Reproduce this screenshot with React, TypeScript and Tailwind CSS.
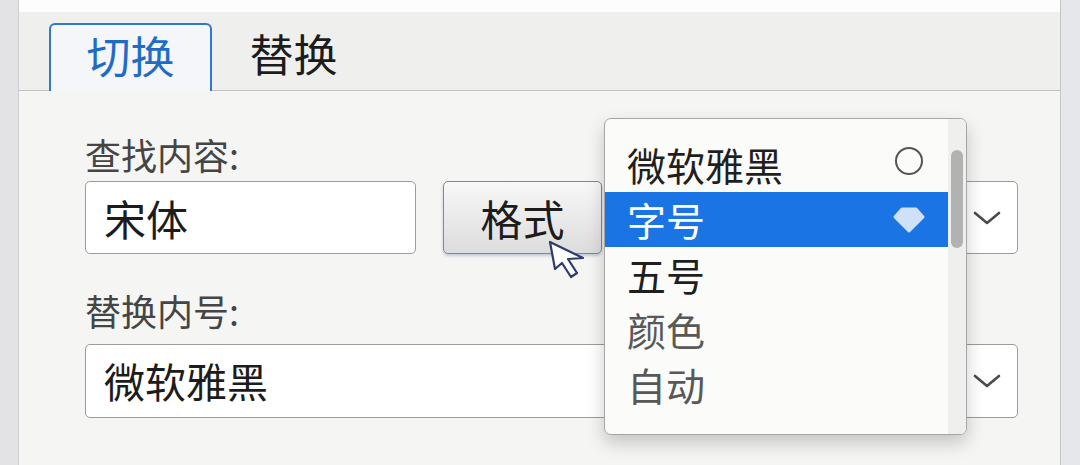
const font = "font-['Noto_Sans_CJK_SC','Noto_Sans',sans-serif]";

const menuItems = [
  { label: '微软雅黑', text: 'text-[#1f1f1f]', mark: 'circle' },
  { label: '字号', text: 'text-white', mark: 'diamond', active: true },
  { label: '五号', text: 'text-[#1f1f1f]' },
  { label: '颜色', text: 'text-[#585858]' },
  { label: '自动', text: 'text-[#585858]' }
];

const Chevron = () => (
  <svg width="28" height="16" viewBox="0 0 28 16">
    <path
      d="M2 3 L14 13 L26 3"
      fill="none"
      stroke="#4a4a4a"
      strokeWidth="2.6"
      strokeLinecap="round"
      strokeLinejoin="round"
    />
  </svg>
);

const App = () => {
  return (
    <div className={`flex h-[465px] w-[1080px] overflow-hidden bg-[#e6e7ea] ${font}`}>
      <div className="w-[19px] shrink-0 border-r border-[#cfcfd1] bg-[#e3e3e5]" />

      <div className="flex w-[1042px] shrink-0 flex-col border-r border-[#c6c6c8]">
        <div className="h-[12px] bg-[#fdfdfd]" />

        {/* tabs */}
        <div className="flex h-[79px] items-end border-b border-[#c2c2c2] bg-[#efefee] pl-[30px]">
          <div className="-mb-px flex h-[68px] w-[163px] items-center justify-center rounded-t-[6px] border-2 border-b-0 border-[#2f78cf] bg-[#f4f6f9] pb-[6px] text-[44px] text-[#1f6cc6]">
            切换
          </div>
          <div className="flex h-[68px] w-[163px] items-center justify-center pb-[6px] text-[44px] text-[#1c1c1c]">
            替换
          </div>
        </div>

        {/* form */}
        <div className="relative flex-1 bg-[#f5f5f3] pl-[66px] pr-[42px]">
          <div className="mt-[42px] flex h-[42px] items-center text-[36px] text-[#454545]">查找内容:</div>

          <div className="mt-[6px] flex h-[73px]">
            <div className="flex w-[331px] items-center rounded-[5px] border border-[#9c9c9c] bg-white pl-[18px] text-[42px] text-[#1c1c1c]">
              宋体
            </div>
            <div className="ml-[27px] flex w-[159px] items-center justify-center rounded-[5px] border border-[#7f8898] bg-gradient-to-b from-[#f8f8f8] to-[#dcdcdc] text-[42px] text-[#1c1c1c] shadow-[0_2px_3px_rgba(40,70,130,0.25)]">
              格式
            </div>
            <div className="ml-[20px] flex flex-1 items-center justify-end rounded-[5px] border border-[#9c9c9c] bg-white pr-[16px]">
              <Chevron />
            </div>
          </div>

          <div className="mt-[35px] flex h-[42px] items-center text-[36px] text-[#454545]">替换内号:</div>

          <div className="mt-[13px] flex h-[74px] items-center justify-between rounded-[5px] border border-[#9c9c9c] bg-white pl-[18px] pr-[16px]">
            <span className="text-[41px] text-[#1c1c1c]">微软雅黑</span>
            <Chevron />
          </div>

          {/* mouse cursor */}
          <svg
            width="40"
            height="42"
            viewBox="0 0 40 42"
            className="absolute left-[529px] top-[149px]"
          >
            <path
              d="M2 2 L7 29 L14 23 L23 37 L29 33 L20 19 L35 18 Z"
              fill="#ffffff"
              stroke="#2c3c6c"
              strokeWidth="2.2"
              strokeLinejoin="round"
            />
          </svg>

          {/* dropdown */}
          <div className="absolute left-[585px] top-[27px] flex h-[317px] w-[363px] overflow-hidden rounded-[7px] border border-[#a6a6a6] bg-[#fbfbfa] shadow-[0_8px_18px_rgba(0,0,0,0.2)]">
            <div className="flex-1 pt-[18px]">
              {menuItems.map((item) => (
                <div
                  key={item.label}
                  className={`flex h-[55px] items-center justify-between pl-[22px] pr-[22px] text-[39px] ${item.text} ${
                    item.active ? 'bg-[#1b74e4]' : ''
                  }`}
                >
                  <span>{item.label}</span>
                  <span className="flex w-[34px] justify-center">
                    {item.mark === 'circle' && (
                      <span className="-mt-[8px] h-[28px] w-[28px] rounded-full border-2 border-[#555]" />
                    )}
                    {item.mark === 'diamond' && (
                      <svg width="34" height="28" viewBox="0 0 34 28">
                        <path
                          d="M10 3 L24 3 L31 11 L17 25 L3 11 Z"
                          fill="#cfe0f8"
                          stroke="#cfe0f8"
                          strokeWidth="3"
                          strokeLinejoin="round"
                        />
                      </svg>
                    )}
                  </span>
                </div>
              ))}
            </div>
            <div className="w-[18px] bg-[#efefee] pt-[31px]">
              <div className="mx-[3px] h-[98px] rounded-full bg-[#b2b2b2]" />
            </div>
          </div>
        </div>
      </div>

      <div className="flex-1" />
    </div>
  );
};

export default App;
